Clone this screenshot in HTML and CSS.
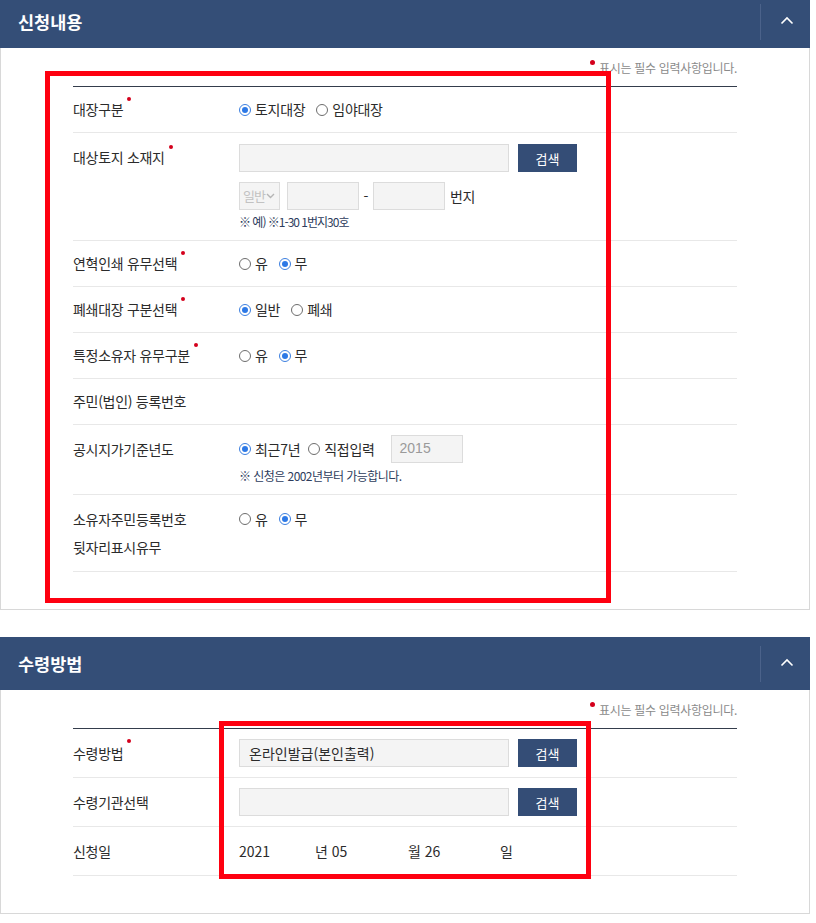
FILE: index.html
```html
<!DOCTYPE html>
<html lang="ko">
<head>
<meta charset="utf-8">
<title>신청내용</title>
<link rel="stylesheet" href="styles.css">
</head>
<body>
<div class="wrap">
  <section class="panel">
    <div class="panel-head">
      <h2 class="panel-title">신청내용</h2>
      <button class="toggle" type="button" aria-label="접기">
        <svg width="14" height="9" viewBox="0 0 14 9"><path d="M1.5 7.5 L7 2 L12.5 7.5" fill="none" stroke="#fff" stroke-width="1.6"/></svg>
      </button>
    </div>
    <div class="panel-body">
      <p class="req-note"><span class="dot"></span>표시는 필수 입력사항입니다.</p>
      <div class="form">
        <div class="row">
          <div class="label">대장구분<span class="req"></span></div>
          <div class="value radios">
            <span class="radio on"></span><span class="rtext">토지대장</span>
            <span class="radio"></span><span class="rtext">임야대장</span>
          </div>
        </div>
        <div class="row">
          <div class="label lh28">대상토지 소재지<span class="req"></span></div>
          <div class="value">
            <div class="line first">
              <span class="input wide"></span>
              <button class="btn" type="button">검색</button>
            </div>
            <div class="line second">
              <span class="select">일반<svg width="9" height="6" viewBox="0 0 9 6"><path d="M1 1 L4.5 4.5 L8 1" fill="none" stroke="#b5b5b5" stroke-width="1.4"/></svg></span>
              <span class="input short"></span>
              <span class="dash">-</span>
              <span class="input short"></span>
              <span class="unit">번지</span>
            </div>
            <p class="hint">※ 예) ※1-30 1번지30호</p>
          </div>
        </div>
        <div class="row">
          <div class="label">연혁인쇄 유무선택<span class="req"></span></div>
          <div class="value radios">
            <span class="radio"></span><span class="rtext">유</span>
            <span class="radio on"></span><span class="rtext">무</span>
          </div>
        </div>
        <div class="row">
          <div class="label">폐쇄대장 구분선택<span class="req"></span></div>
          <div class="value radios">
            <span class="radio on"></span><span class="rtext">일반</span>
            <span class="radio"></span><span class="rtext">폐쇄</span>
          </div>
        </div>
        <div class="row">
          <div class="label">특정소유자 유무구분<span class="req"></span></div>
          <div class="value radios">
            <span class="radio"></span><span class="rtext">유</span>
            <span class="radio on"></span><span class="rtext">무</span>
          </div>
        </div>
        <div class="row">
          <div class="label">주민(법인) 등록번호</div>
          <div class="value"></div>
        </div>
        <div class="row">
          <div class="label lh28">공시지가기준년도</div>
          <div class="value">
            <div class="line radios">
              <span class="radio on"></span><span class="rtext tight">최근7년</span>
              <span class="radio"></span><span class="rtext">직접입력</span>
              <span class="input year">2015</span>
            </div>
            <p class="hint hint2">※ 신청은 2002년부터 가능합니다.</p>
          </div>
        </div>
        <div class="row">
          <div class="label lh28">소유자주민등록번호<br>뒷자리표시유무</div>
          <div class="value radios lh28">
            <span class="radio"></span><span class="rtext">유</span>
            <span class="radio on"></span><span class="rtext">무</span>
          </div>
        </div>
      </div>
    </div>
    <div class="mark mark1"></div>
  </section>

  <section class="panel second-panel">
    <div class="panel-head">
      <h2 class="panel-title">수령방법</h2>
      <button class="toggle" type="button" aria-label="접기">
        <svg width="14" height="9" viewBox="0 0 14 9"><path d="M1.5 7.5 L7 2 L12.5 7.5" fill="none" stroke="#fff" stroke-width="1.6"/></svg>
      </button>
    </div>
    <div class="panel-body">
      <p class="req-note"><span class="dot"></span>표시는 필수 입력사항입니다.</p>
      <div class="form">
        <div class="row row2">
          <div class="label">수령방법<span class="req"></span></div>
          <div class="value line">
            <span class="input wide filled">온라인발급(본인출력)</span>
            <button class="btn" type="button">검색</button>
          </div>
        </div>
        <div class="row row2">
          <div class="label">수령기관선택</div>
          <div class="value line">
            <span class="input wide"></span>
            <button class="btn" type="button">검색</button>
          </div>
        </div>
        <div class="row row2">
          <div class="label">신청일</div>
          <div class="value date">
            <span class="d1">2021</span><span class="d2">년 05</span><span class="d3">월 26</span><span>일</span>
          </div>
        </div>
      </div>
    </div>
    <div class="mark mark2"></div>
  </section>
</div>
</body>
</html>
```

FILE: styles.css
```css
* { box-sizing: border-box; }
html, body { margin: 0; padding: 0; background: #fff; }
body {
  font-family: "Noto Sans CJK KR", "Noto Sans", sans-serif;
  color: #2b2b2b;
  font-size: 14px;
  letter-spacing: -0.3px;
}
.wrap { width: 810px; margin-top: -5px; }

.panel { position: relative; }
.second-panel { margin-top: 27px; }

.panel-head {
  height: 53px;
  background: #344e77;
  display: flex;
  align-items: center;
  justify-content: space-between;
}
.panel-title {
  margin: 0 0 0 18px;
  font-size: 17.5px;
  font-weight: 700;
  color: #fff;
  letter-spacing: 0;
}
.toggle {
  width: 50px;
  height: 36px;
  border: 0;
  border-left: 1px solid #4b628a;
  background: transparent;
  padding: 0;
  display: flex;
  align-items: center;
  justify-content: center;
  margin-top: 1px;
}
.toggle svg { display: block; margin-top: -3px; margin-left: 2px; }

.panel-body {
  border: 1px solid #d8d8d8;
  border-top: 0;
  padding: 11px 72px 37px 72px;
}
.req-note {
  margin: 0 0 9px;
  text-align: right;
  font-size: 12px;
  line-height: 18px;
  color: #8a8a8a;
  letter-spacing: -0.3px;
}
.dot {
  display: inline-block;
  width: 5px; height: 5px;
  border-radius: 50%;
  background: #d4001c;
  vertical-align: top;
  margin: 1px 4px 0 0;
}
.form { border-top: 1px solid #343d4c; }
.row {
  display: grid;
  grid-template-columns: 166px 1fr;
  padding: 10px 0;
  border-bottom: 1px solid #e8e8e8;
}
.label {
  line-height: 25px;
  white-space: nowrap;
}
.lh28 { line-height: 28px; }
.req {
  display: inline-block;
  width: 4px; height: 4px;
  border-radius: 50%;
  background: #d4001c;
  vertical-align: top;
  margin-left: 4px;
}
.lh28 .req { margin-top: 2px; }

.value { min-height: 25px; }
.radios { display: flex; align-items: center; line-height: 25px; }
.radios.lh28 { line-height: 28px; align-items: flex-start; }
.radios.lh28 .radio { margin-top: 8px; }
.radio {
  width: 12px; height: 12px;
  border-radius: 50%;
  border: 1px solid #6d6d6d;
  background: #fff;
  margin-right: 4px;
  flex: none;
  position: relative;
}
.radio.on { border-color: #3c7fe0; }
.radio.on::after {
  content: "";
  position: absolute;
  left: 2px; top: 2px;
  width: 6px; height: 6px;
  border-radius: 50%;
  background: #2d79e6;
}
.rtext { margin-right: 11px; }
.rtext.tight { margin-right: 8px; }

.line { display: flex; align-items: center; }
.line.first { margin-top: 1px; }
.line.second { margin-top: 10px; }
.input {
  display: inline-block;
  height: 28px;
  background: #f4f4f4;
  border: 1px solid #dcdcdc;
  flex: none;
}
.input.wide { width: 270px; }
.input.short { width: 72px; }
.input.year {
  width: 72px;
  margin-left: 5px;
  color: #9a9a9a;
  font-family: "Liberation Sans", Arial, sans-serif;
  letter-spacing: 0;
  font-size: 14px;
  line-height: 24px;
  padding-left: 8px;
}
.input.filled {
  padding-left: 9px;
  line-height: 26px;
  letter-spacing: 0;
}
.btn {
  width: 59px;
  height: 28px;
  margin-left: 9px;
  border: 0;
  background: #344d76;
  color: #fff;
  font-family: inherit;
  font-size: 13px;
  letter-spacing: 0;
  padding: 0;
}
.select {
  width: 41px;
  height: 28px;
  background: #f4f4f4;
  border: 1px solid #dcdcdc;
  color: #c2c2c2;
  font-size: 13px;
  line-height: 26px;
  padding-left: 3px;
  display: inline-flex;
  align-items: center;
  margin-right: 7px;
  letter-spacing: -1px;
}
.select svg { margin-left: 1px; }
.dash { width: 14px; text-align: center; letter-spacing: 0; }
.unit { margin-left: 5px; }
.hint {
  margin: 4px 0 0;
  font-size: 12px;
  line-height: 16px;
  color: #2d3c5c;
  letter-spacing: -1px;
}
.hint2 { margin-top: 5px; letter-spacing: -0.55px; }

.row2 { padding: 10px 0; }
.row2 .label { line-height: 28px; }
.date { line-height: 28px; display: flex; letter-spacing: 0; }
.date span { display: inline-block; }
.d1 { width: 76px; }
.d2 { width: 93px; }
.d3 { width: 92px; }

.mark {
  position: absolute;
  border: 5px solid #fe0010;
  pointer-events: none;
}
.mark1 { left: 45px; top: 76px; width: 566px; height: 532px; }
.mark2 { left: 219px; top: 84px; width: 372px; height: 158px; }
```
